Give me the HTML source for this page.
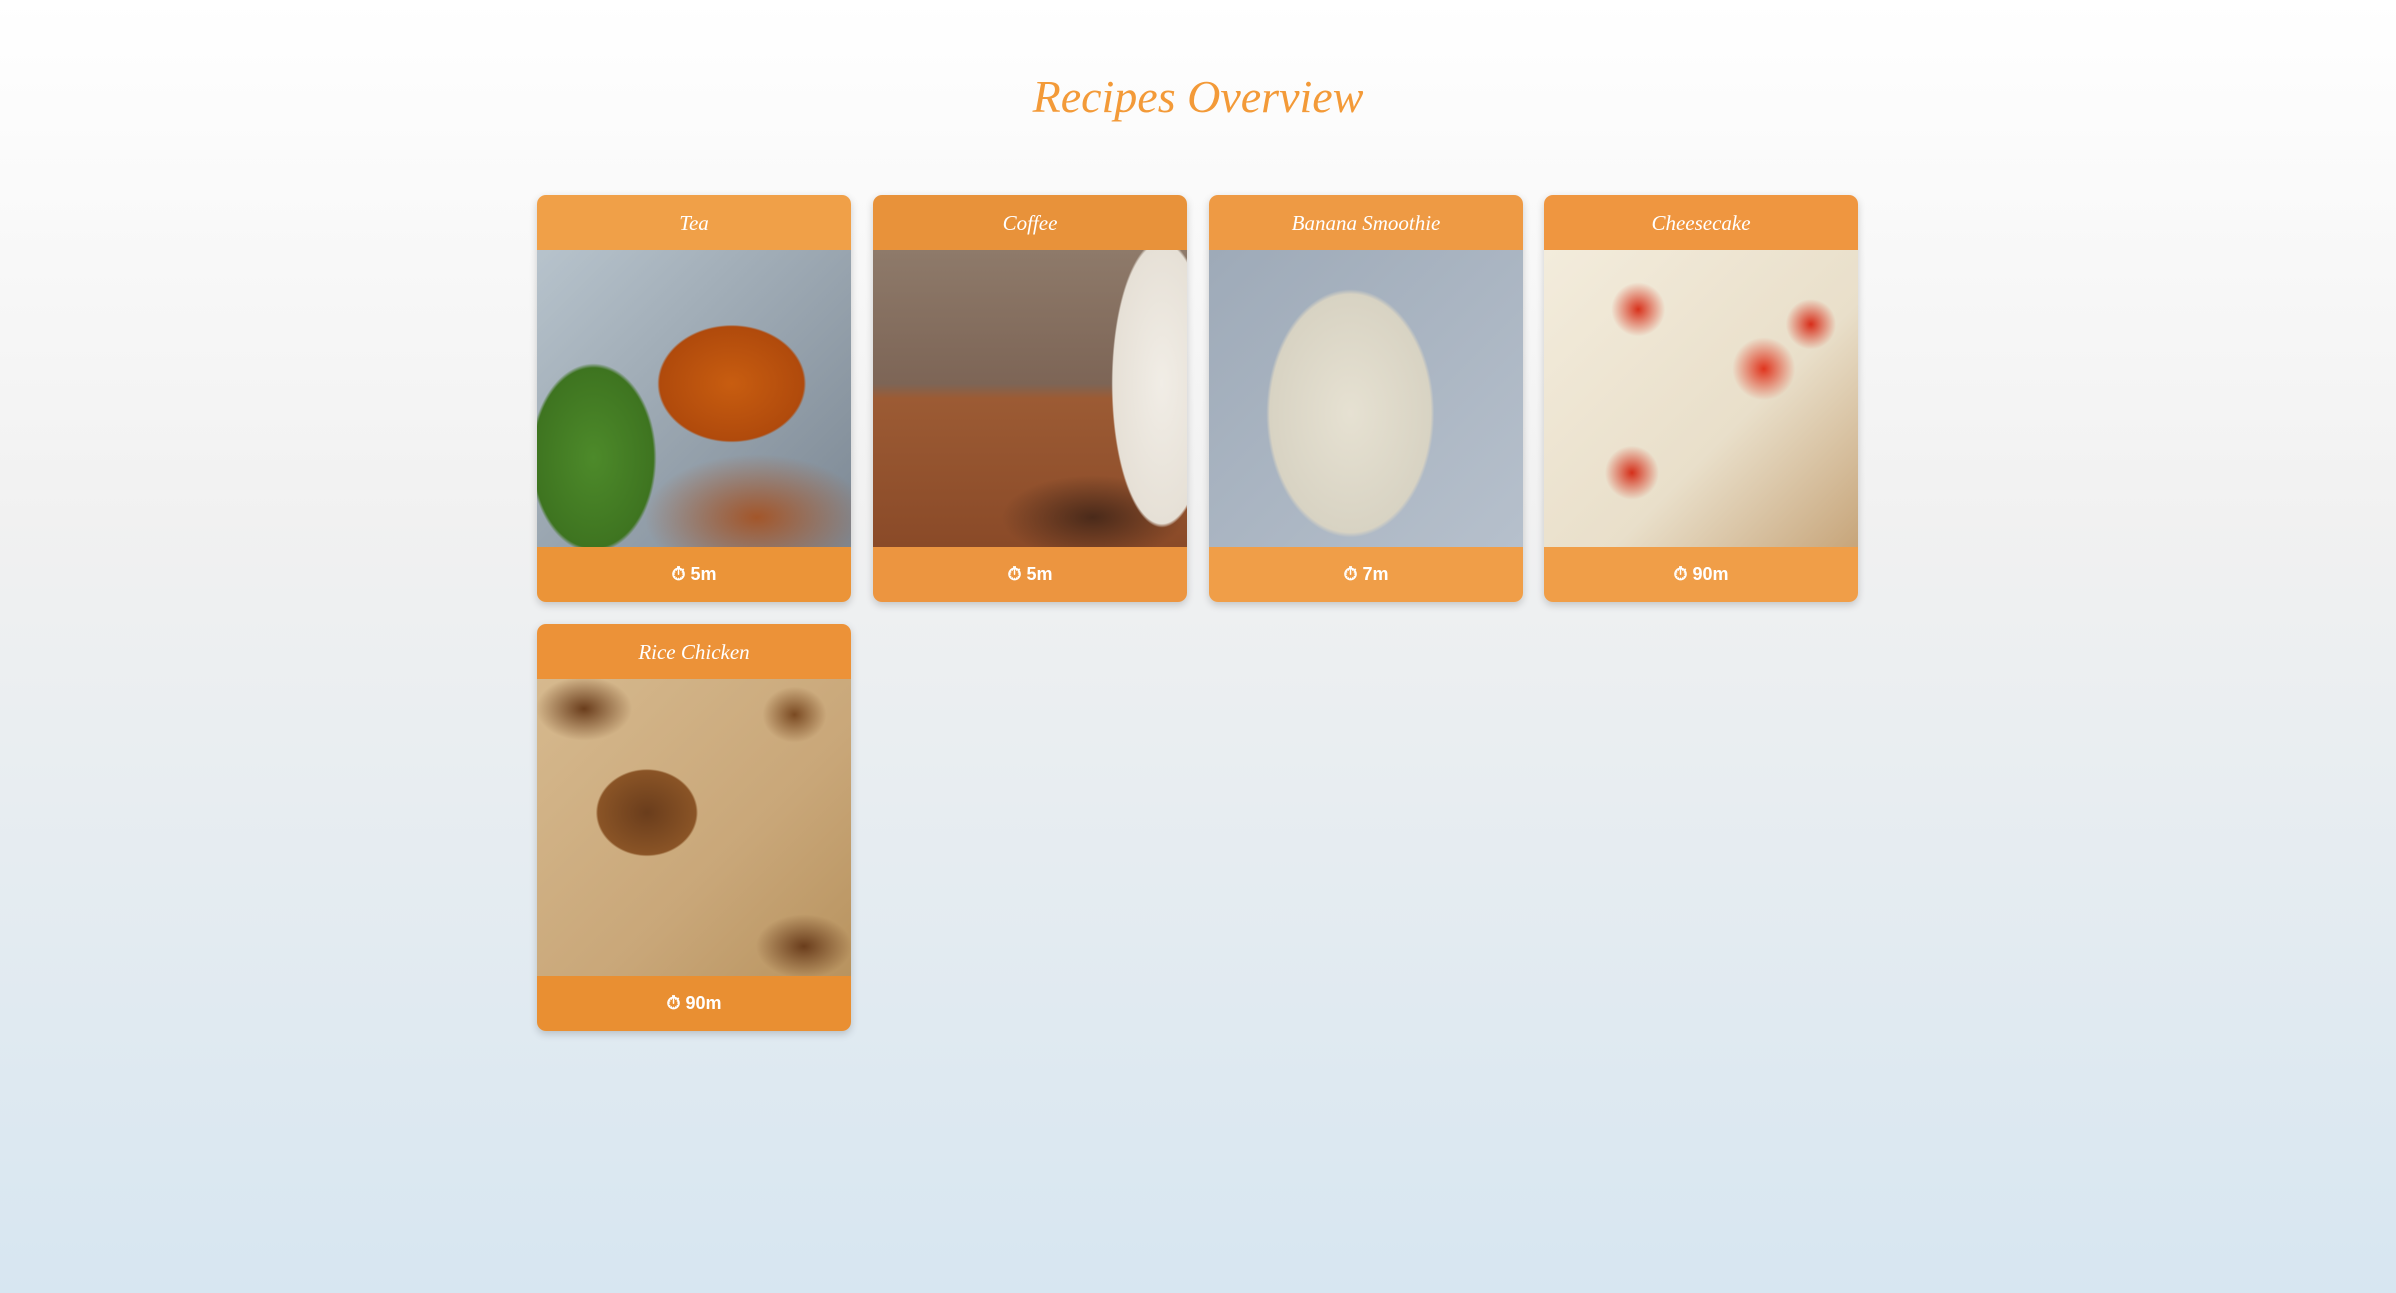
<!DOCTYPE html>
<html><head><meta charset="utf-8"><style>
html,body{margin:0;padding:0}
body{width:2396px;height:1293px;background:linear-gradient(#ffffff 0%,#f1f1f1 40%,#d7e6f1 100%);font-family:"Liberation Sans",sans-serif;position:relative;overflow:hidden}
h1{position:absolute;top:70px;left:0;width:2396px;text-align:center;margin:0;font-family:"Liberation Serif",serif;font-style:italic;font-weight:normal;font-size:46px;color:#f39a38}
.card{position:absolute;width:314px;height:407px;border-radius:9px;overflow:hidden;box-shadow:0 3px 8px rgba(0,0,0,.18)}
.hd{position:absolute;top:0;left:0;right:0;height:55px;background:#f0a048;color:#fff;font-family:"Liberation Serif",serif;font-style:italic;font-size:21px;text-align:center;line-height:57px}
.im{position:absolute;top:55px;left:0;right:0;height:297px}
.ft{position:absolute;bottom:0;left:0;right:0;height:55px;background:#eb9438;color:#fff;font-weight:bold;font-size:18px;text-align:center;line-height:55px}
</style></head><body>
<h1>Recipes Overview</h1>

<div class="card" style="left:537px;top:195px">
<div class="hd">Tea</div>
<div class="im" style="background:radial-gradient(ellipse 120px 95px at 62% 45%,#c85d10 0%,#b04a0c 60%,transparent 62%),radial-gradient(ellipse 100px 150px at 18% 70%,#4d8a2a 0%,#3e7420 60%,transparent 63%),radial-gradient(ellipse 160px 90px at 70% 90%,#a3562a 0%,transparent 70%),linear-gradient(135deg,#b7c3cc,#7c8894)"></div>
<div class="ft">⏱ 5m</div>
</div>

<div class="card" style="left:873px;top:195px">
<div class="hd" style="background:#e8923a">Coffee</div>
<div class="im" style="background:radial-gradient(ellipse 70px 200px at 92% 45%,#f1ede6 0%,#e6e0d6 70%,transparent 72%),radial-gradient(ellipse 130px 60px at 70% 90%,#4a2a1a 0%,transparent 70%),linear-gradient(#8e7a6a 0%,#7d6556 45%,#9c5b34 50%,#8a4a28 100%)"></div>
<div class="ft" style="background:#ec9540">⏱ 5m</div>
</div>

<div class="card" style="left:1209px;top:195px">
<div class="hd" style="background:#ee9a44">Banana Smoothie</div>
<div class="im" style="background:radial-gradient(ellipse 115px 170px at 45% 55%,#e6e1d2 0%,#d8d3c3 70%,transparent 73%),linear-gradient(135deg,#9eaab8,#b6c0cc)"></div>
<div class="ft" style="background:#f09e48">⏱ 7m</div>
</div>

<div class="card" style="left:1544px;top:195px">
<div class="hd" style="background:#ef9640">Cheesecake</div>
<div class="im" style="background:radial-gradient(circle 30px at 30% 20%,#d8321c 0%,transparent 90%),radial-gradient(circle 35px at 70% 40%,#e0351e 0%,transparent 90%),radial-gradient(circle 30px at 28% 75%,#d52f1a 0%,transparent 90%),radial-gradient(circle 28px at 85% 25%,#d82e1a 0%,transparent 90%),linear-gradient(135deg,#f3ecdc,#e9dfca 60%,#c7a57a)"></div>
<div class="ft" style="background:#f09e48">⏱ 90m</div>
</div>

<div class="card" style="left:537px;top:624px">
<div class="hd" style="background:#ec9238">Rice Chicken</div>
<div class="im" style="background:radial-gradient(ellipse 70px 60px at 35% 45%,#6a3d1c 0%,#8a5426 70%,transparent 73%),radial-gradient(ellipse 60px 40px at 15% 10%,#6a3d1c 0%,transparent 80%),radial-gradient(ellipse 60px 40px at 85% 90%,#6a3d1c 0%,transparent 80%),radial-gradient(ellipse 40px 35px at 82% 12%,#7a4a22 0%,transparent 80%),linear-gradient(135deg,#d6b98e,#c9a779 60%,#b8935f)"></div>
<div class="ft" style="background:#e98f32">⏱ 90m</div>
</div>
</body></html>
